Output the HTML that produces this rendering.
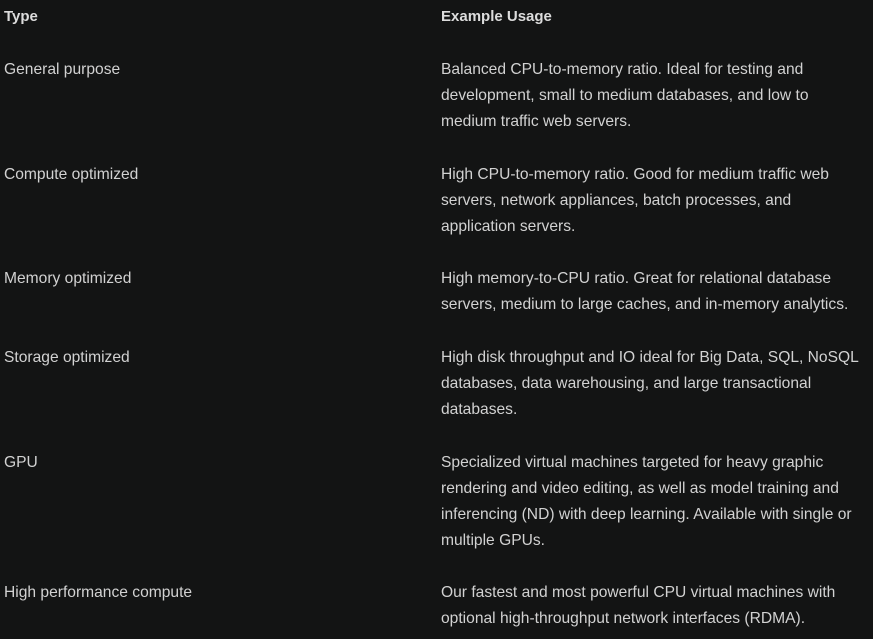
<!DOCTYPE html>
<html><head><meta charset="utf-8"><style>
html,body{margin:0;padding:0;background:#131414;width:873px;height:639px;overflow:hidden}
body{font-family:"Segoe UI","Liberation Sans",sans-serif;font-size:15.6px;color:#d2d2d2;position:relative}
.r{position:absolute;left:0;width:873px;line-height:26px;white-space:nowrap}
.a{position:absolute;left:4px;top:0}
.b{position:absolute;left:441px;top:0}
.h{font-weight:bold;color:#dcdcdc;font-size:15px}
</style></head><body>
<div class="r h" style="top:4px"><div class="a">Type</div><div class="b">Example Usage</div></div>
<div class="r" style="top:57px"><div class="a">General purpose</div><div class="b">Balanced CPU-to-memory ratio. Ideal for testing and<br>development, small to medium databases, and low to<br>medium traffic web servers.</div></div>
<div class="r" style="top:162px"><div class="a">Compute optimized</div><div class="b">High CPU-to-memory ratio. Good for medium traffic web<br>servers, network appliances, batch processes, and<br>application servers.</div></div>
<div class="r" style="top:266px"><div class="a">Memory optimized</div><div class="b">High memory-to-CPU ratio. Great for relational database<br>servers, medium to large caches, and in-memory analytics.</div></div>
<div class="r" style="top:345px"><div class="a">Storage optimized</div><div class="b">High disk throughput and IO ideal for Big Data, SQL, NoSQL<br>databases, data warehousing, and large transactional<br>databases.</div></div>
<div class="r" style="top:450px"><div class="a">GPU</div><div class="b">Specialized virtual machines targeted for heavy graphic<br>rendering and video editing, as well as model training and<br>inferencing (ND) with deep learning. Available with single or<br>multiple GPUs.</div></div>
<div class="r" style="top:580px"><div class="a">High performance compute</div><div class="b">Our fastest and most powerful CPU virtual machines with<br>optional high-throughput network interfaces (RDMA).</div></div>
</body></html>
